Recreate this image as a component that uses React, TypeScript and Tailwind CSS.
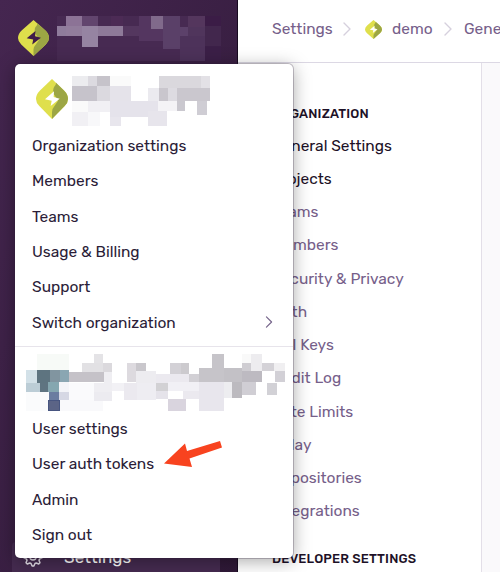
import React from "react";

type Block = [number, number, number, number, string];

const orgBlocks: Block[] = [
  [171, 48, 493, 135, "#472a52"],
  [198, 48, 48, 30, "#8c7396"], [246, 48, 48, 30, "#62456e"], [332, 48, 37, 30, "#4c2b55"],
  [171, 78, 27, 30, "#8f7c9b"], [198, 78, 48, 30, "#927d9c"], [246, 78, 48, 62, "#9684a2"],
  [294, 78, 75, 30, "#8e7a99"], [369, 78, 48, 30, "#54375f"], [417, 48, 36, 75, "#543660"],
  [453, 87, 37, 36, "#543660"], [453, 48, 37, 39, "#806a8b"], [490, 48, 50, 99, "#5a4068"],
  [540, 80, 26, 28, "#5c416a"], [566, 48, 49, 32, "#54365d"], [566, 80, 49, 28, "#50355c"],
  [540, 108, 75, 75, "#4d325a"], [615, 78, 48, 60, "#42274d"], [615, 48, 48, 30, "#3b1c46"],
  [615, 138, 48, 45, "#3b1f47"],
];

const menuOrgBlocks: Block[] = [
  [171, 48, 48, 30, "#ececef"], [219, 48, 27, 30, "#dcdae0"], [246, 48, 39, 30, "#c6c3ca"],
  [171, 78, 75, 45, "#c6c3cb"], [246, 78, 39, 45, "#dbd9df"], [285, 78, 64, 45, "#e5e3ea"],
  [285, 48, 64, 30, "#fafafa"], [398, 83, 34, 40, "#ebeaef"], [432, 48, 126, 35, "#dad8dd"],
  [558, 48, 27, 35, "#e3e1e6"], [432, 83, 27, 40, "#c9c6cd"], [459, 83, 26, 40, "#dddbe1"],
  [485, 83, 100, 40, "#cac7ce"], [485, 123, 25, 30, "#cac8cf"], [545, 123, 30, 43, "#cfcdd4"],
  [171, 123, 48, 32, "#fafafa"], [219, 123, 66, 32, "#f1f0f4"], [285, 123, 144, 49, "#e5e3eb"],
  [429, 123, 56, 30, "#f4f3f6"], [171, 155, 48, 43, "#f1f0f4"], [219, 155, 37, 43, "#f8f8fa"],
  [285, 172, 34, 26, "#e8e6ed"], [398, 153, 59, 45, "#e7e5ec"],
];

const userBlocks: Block[] = [
  [65, 42, 96, 48, "#f7faf7"], [32, 90, 33, 38, "#d3e1e8"], [65, 90, 40, 38, "#5e7480"],
  [105, 90, 30, 38, "#8195a0"], [135, 90, 26, 36, "#8aa6b2"], [32, 128, 43, 28, "#bccdd6"],
  [75, 128, 25, 28, "#5f7481"], [132, 126, 29, 30, "#f3f4f8"], [100, 126, 32, 30, "#85a7b0"],
  [32, 156, 70, 57, "#fafbfc"], [136, 182, 128, 31, "#f9f9fb"], [161, 128, 76, 54, "#fafafc"],
  [102, 156, 30, 28, "#6b7da0"], [100, 182, 36, 32, "#475580"], [103, 184, 29, 27, "#5b6486"],
  [132, 156, 29, 26, "#d6d8e4"], [161, 95, 105, 31, "#c5c2c8"], [237, 42, 26, 27, "#e4e3e6"],
  [200, 69, 63, 26, "#e2e1e4"], [263, 69, 28, 26, "#dbd9dd"], [266, 95, 25, 33, "#efeef2"],
  [237, 128, 54, 28, "#efeef2"], [237, 156, 54, 27, "#ecebf0"], [291, 128, 37, 27, "#f2f1f5"],
  [336, 69, 26, 57, "#dddadf"], [362, 69, 30, 25, "#c9c7cc"], [362, 94, 60, 34, "#edecf0"],
  [328, 128, 39, 54, "#ebe9ef"], [367, 128, 55, 54, "#eeedf2"], [422, 102, 100, 26, "#ebe9ef"],
  [465, 69, 32, 33, "#d3d1d6"], [497, 69, 25, 33, "#cccace"], [522, 102, 30, 24, "#d2d0d5"],
  [422, 128, 37, 25, "#d2d1d4"], [422, 153, 37, 25, "#e5e3ea"], [459, 126, 93, 27, "#f1f0f5"],
  [459, 179, 54, 34, "#d9d4de"], [504, 153, 48, 25, "#ebe9ef"], [592, 42, 35, 41, "#c6c4c9"],
  [552, 83, 75, 43, "#c6c4c9"], [627, 83, 54, 43, "#c3c1c6"], [552, 126, 75, 87, "#e8e6ed"],
  [627, 126, 25, 50, "#ededf0"], [652, 126, 29, 50, "#bcbabf"], [682, 69, 27, 24, "#cfcdd2"],
  [682, 42, 26, 27, "#f9f9f9"], [708, 42, 33, 51, "#edecef"], [742, 69, 34, 24, "#d4d2d7"],
  [776, 69, 35, 24, "#f0eff1"], [682, 93, 60, 33, "#bdbac1"], [780, 93, 31, 33, "#d2d0d6"],
  [681, 126, 42, 40, "#d0ced4"], [756, 128, 30, 38, "#d2d1d6"],
];

function Mosaic({ blocks, viewBox, className }: { blocks: Block[]; viewBox: string; className: string }) {
  return (
    <svg viewBox={viewBox} className={className} preserveAspectRatio="none" shapeRendering="crispEdges">
      {blocks.map(([x, y, w, h, fill], i) => (
        <rect key={i} x={x} y={y} width={w} height={h} fill={fill} />
      ))}
    </svg>
  );
}

function Logo({ bolt, className }: { bolt: string; className: string }) {
  return (
    <svg viewBox="0 0 96 118" className={className} preserveAspectRatio="none">
      <path d="M48 0 L84 34 Q96 46 96 59 Q96 70 86 80 L48 118 L10 80 Q0 70 0 59 Q0 46 12 34 Z" fill="#dfdf4c" />
      <path d="M60 11 L84 34 Q96 46 96 59 Q96 70 86 80 L48 118 L48 97 Q48 88 54 82 L66 64 L52 42 Q50 26 57 20 Q60 17 60 11 Z" fill="#9ca644" />
      <path d="M54 36 L27 60 L47 64 L44 80 L71 58 L53 53 Z" fill={bolt} />
    </svg>
  );
}

function Chevron({ className }: { className: string }) {
  return (
    <svg viewBox="0 0 8 14" className={className} fill="none" stroke="currentColor" strokeWidth="1.4" strokeLinecap="round" strokeLinejoin="round">
      <path d="M1 1 L7 7 L1 13" />
    </svg>
  );
}

const orgItems = ["Organization settings", "Members", "Teams", "Usage & Billing", "Support", "Switch organization"];

const userItems = ["User settings", "User auth tokens", "Admin", "Sign out"];

const navItems = [
  "General Settings",
  "Projects",
  "Teams",
  "Members",
  "Security & Privacy",
  "Auth",
  "API Keys",
  "Audit Log",
  "Rate Limits",
  "Relay",
  "Repositories",
  "Integrations",
];

function MenuItems({ items }: { items: string[] }) {
  return (
    <ul className="pl-[17px]">
      {items.map((label) => (
        <li key={label} className="flex h-[35.45px] items-center justify-between pr-5">
          <span>{label}</span>
          {label === "Switch organization" && <Chevron className="-mt-0.5 h-3 w-2 text-[#76658b]" />}
        </li>
      ))}
    </ul>
  );
}

function GearIcon() {
  const points = Array.from({ length: 32 }, (_, i) => {
    const r = i % 4 < 2 ? 9 : 6.8;
    const a = ((i - 0.5) / 32) * Math.PI * 2 - Math.PI / 2;
    return `${(10 + r * Math.cos(a)).toFixed(2)},${(10 + r * Math.sin(a)).toFixed(2)}`;
  }).join(" ");
  return (
    <svg viewBox="0 0 20 20" className="h-5 w-5" fill="none" stroke="#e5dfe9" strokeWidth="1.5" strokeLinejoin="round">
      <polygon points={points} />
      <circle cx="10" cy="10" r="3" />
    </svg>
  );
}

export default function App() {
  return (
    <div className="relative flex h-[572px] w-[500px] overflow-hidden bg-white font-['Rubik','Roboto',sans-serif] text-[15.5px] leading-5">
      <aside className="flex w-[238px] shrink-0 flex-col justify-between border-r border-[#170a20] bg-linear-[294deg,#2f1937_0%,#452650_100%] bg-[#3d1c47]">
        <div className="flex items-start pt-4 pl-[18px]">
          <Logo bolt="#3e1b49" className="mt-1 h-[36px] w-[31px]" />
          <Mosaic blocks={orgBlocks} viewBox="171 48 493 135" className="ml-2 h-[45px] w-[164px]" />
        </div>
        <div className="ml-3 flex h-[30px] w-[208px] items-center rounded-t bg-[#452b50] pl-[11px] text-white">
          <GearIcon />
          <span className="ml-[21px] text-[17px] tracking-[0.1px]">Settings</span>
        </div>
      </aside>

      <main className="flex min-w-0 flex-1 flex-col">
        <header className="flex h-[63px] shrink-0 items-center overflow-hidden border-b border-[#dcd8e4] pb-1 pl-[34px] text-[#76608a]">
          <span className="w-[71px] shrink-0">Settings</span>
          <Chevron className="h-3.5 w-2 shrink-0 text-[#d6d0dd]" />
          <Logo bolt="#fff" className="ml-[14px] h-[19px] w-[17px] shrink-0" />
          <span className="ml-[10px] w-[52px] shrink-0">demo</span>
          <Chevron className="h-3.5 w-2 shrink-0 text-[#d6d0dd]" />
          <span className="ml-[12px] shrink-0">General Settings</span>
        </header>
        <div className="flex min-h-0 flex-1">
          <nav className="w-[244px] shrink-0 border-r border-[#e3dfe8] pt-[41px] pl-[34px] text-[#76608a]">
            <h2 className="text-[13px] font-medium tracking-[0.15px] text-[#1d1127]">ORGANIZATION</h2>
            <ul className="mt-[5px]">
              {navItems.map((label, i) => (
                <li key={label} className={i < 2 ? "flex h-[33.25px] items-center text-[#1d1127]" : "flex h-[33.25px] items-center"}>
                  {label}
                </li>
              ))}
            </ul>
            <h2 className="mt-[21px] text-[13px] font-medium tracking-[0.15px] whitespace-nowrap text-[#1d1127]">DEVELOPER SETTINGS</h2>
          </nav>
          <div className="flex-1 bg-[#faf9fb]" />
        </div>
      </main>

      <div className="absolute top-16 left-[15px] h-[494px] w-[278px] rounded-[5px] bg-white text-[#2b1d38] shadow-[0_0_0_1px_rgba(43,29,56,0.25),0_3px_18px_rgba(0,0,0,0.35)]">
        <div className="flex h-16 items-start pt-3 pl-[21px]">
          <Logo bolt="#fff" className="mt-[3px] h-[40px] w-[32px]" />
          <Mosaic blocks={menuOrgBlocks} viewBox="171 48 414 150" className="ml-1 h-[50px] w-[138px]" />
        </div>
        <MenuItems items={orgItems} />
        <hr className="mt-[5px] border-[#e7e4eb]" />
        <div className="h-[64.6px] pt-[7px] pl-[10px]">
          <Mosaic blocks={userBlocks} viewBox="30 42 783 172" className="h-[57px] w-[261px]" />
        </div>
        <MenuItems items={userItems} />
      </div>

      <svg viewBox="0 0 58 27" className="absolute top-[441px] left-[164px] h-[27px] w-[58px]">
        <path d="M0 22.5 L21 2.5 L23 10 L56 0 L58 6.5 L25.5 17.5 L28 26 Z" fill="#f8431f" />
      </svg>
    </div>
  );
}
